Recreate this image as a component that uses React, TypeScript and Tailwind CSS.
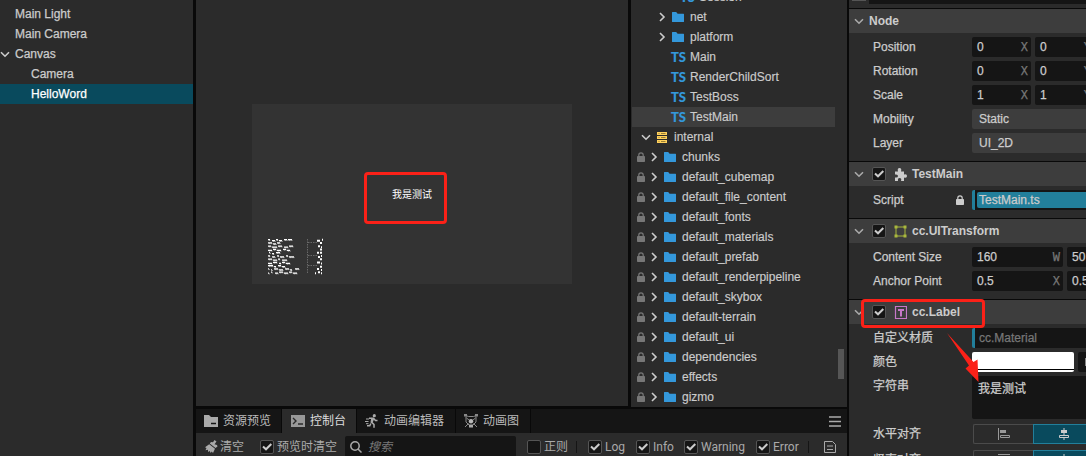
import React from "react";

const STATS: [number, string, string, number][] = [
  [1, "M0 0H2M4 1H7M8 0H10M11 1H14M16 0H19M20 0H24", "M0 1H3M5 0H6", 5],
  [2, "M0 0H4M5 1H8M9 0H12", "M0 0H2", 2],
  [3, "M0 0H3M4 1H9M10 0H14M16 1H20M21 0H25", "M0 0H2M3 1H4", 4],
  [4, "M0 1H4M5 0H8M9 1H13M15 0H18M19 1H22", "M0 0H2", 2],
  [5, "M1 0H2M4 1H6M8 0H12", "M0 0H2M3 0H5", 5],
  [6, "M0 0H2M4 1H7M9 0H11M12 1H16M18 0H20M21 1H26", "M0 1H2M3 0H4", 4],
  [7, "M0 0H4M5 1H9M10 0H12M14 1H19", "M0 0H2", 2],
  [8, "M0 1H4M5 0H9M11 1H13M14 0H17M18 1H22", "M0 0H3M4 1H5", 5],
  [9, "M0 0H5M6 1H8M10 0H13M14 1H17", "M0 1H2", 2],
  [10, "M0 0H1M3 1H4M6 0H10M11 1H15M17 0H21M22 1H24M27 0H31", "M0 0H2M4 1H5", 5],
  [11, "M0 1H1M3 0H4M7 1H10M11 0H15M16 1H20M21 0H24M25 1H29", "M0 1H1M3 0H5M6 1H7", 7],
];

function Chevron({ open = false, className = "" }: { open?: boolean; className?: string }) {
  return (
    <svg width="10" height="10" viewBox="0 0 10 10" fill="none" stroke="currentColor" strokeWidth="1.6" className={`shrink-0 ${className}`}>
      <path d={open ? "M1 3.2L5 7.2L9 3.2" : "M3 1L7 5L3 9"} />
    </svg>
  );
}

function Folder() {
  return (
    <svg width="12" height="10" viewBox="0 0 12 10" fill="#3498db" className="shrink-0">
      <path d="M0 .5Q0 0 .5 0H4.2L5.6 1.7H11.5Q12 1.7 12 2.2V9.5Q12 10 11.5 10H.5Q0 10 0 9.5Z" />
    </svg>
  );
}

function Lock({ color }: { color: string }) {
  return (
    <svg width="8" height="10" viewBox="0 0 8 10" className="shrink-0">
      <path d="M1.8 4.5V3A2.2 2.2 0 0 1 6.2 3V4.5" fill="none" stroke={color} strokeWidth="1.2" />
      <rect y="4" width="8" height="6" rx=".7" fill={color} />
    </svg>
  );
}

function Check({ on = true }: { on?: boolean }) {
  return (
    <span className="block size-[14px] shrink-0 rounded-[2px] border border-[#555] bg-[#151515]">
      {on && (
        <svg width="12" height="12" viewBox="0 0 12 12" fill="none" stroke="#ccc" strokeWidth="2">
          <path d="M2 5.5L5 8.3L10.3 3" />
        </svg>
      )}
    </span>
  );
}

function HRow({ children, className = "" }: { children: React.ReactNode; className?: string }) {
  return <div className={`flex h-5 items-center ${className}`}>{children}</div>;
}

function AssetFolder({ name }: { name: string }) {
  return (
    <HRow className="pl-[6px]">
      <Lock color="#777" />
      <Chevron className="mr-[5px] ml-[4px]" />
      <Folder />
      <span className="ml-[6px]">{name}</span>
    </HRow>
  );
}

function TsMark() {
  return <span className="w-[19px] font-['Lato','Open_Sans',sans-serif] text-[13px] font-black text-[#3498db]">TS</span>;
}

function TsFile({ name, active = false }: { name: string; active?: boolean }) {
  return (
    <HRow className={active ? "mr-[12px] ml-px bg-[#3d3d3d] pl-[39px]" : "pl-10"}>
      <TsMark />
      <span>{name}</span>
    </HRow>
  );
}

function Section({ title, icon, check = true }: { title: string; icon?: React.ReactNode; check?: boolean }) {
  return (
    <div className="flex h-[25px] shrink-0 items-center border-t border-[#090909] bg-[#3d3d3d] pl-[5px]">
      <Chevron open className="text-[#aaa]" />
      {check && <span className="mr-[8px] ml-[8px]"><Check /></span>}
      {icon}
      <b className="ml-[5px] [-webkit-text-stroke:0]">{title}</b>
    </div>
  );
}

function Prop({ label, children, lock = false }: { label: string; children: React.ReactNode; lock?: boolean }) {
  return (
    <div className="flex h-5 shrink-0 items-center pl-6">
      <span className="flex w-[99px] shrink-0 items-center justify-between pr-[8px]">
        {label}
        {lock && <Lock color="#ccc" />}
      </span>
      {children}
    </div>
  );
}

function Num({ value, unit, wide = false }: { value: string; unit: string; wide?: boolean }) {
  return (
    <span className={`mr-1 flex h-5 shrink-0 items-center justify-between rounded-[2px] bg-[#151515] pr-[3px] pl-[5px] ${wide ? "w-[91px]" : "w-[59px]"}`}>
      {value}
      <span className="pt-[2px] font-['Liberation_Mono',monospace] text-[12px] leading-[18px] text-[#777]">{unit}</span>
    </span>
  );
}

function Tab({ icon, label, className }: { icon: React.ReactNode; label: string; className: string }) {
  return (
    <div className={`flex h-6 shrink-0 items-center gap-[5px] border-r border-[#090909] pl-[8px] ${className}`}>
      {icon}
      <span>{label}</span>
    </div>
  );
}

const runner = (
  <svg width="14" height="14" viewBox="0 0 14 14" fill="none" stroke="#aaa" strokeWidth="1.5" className="shrink-0">
    <circle cx="9.3" cy="1.7" r="1.6" fill="#aaa" stroke="none" />
    <path d="M4 4.2H8.5L10.5 6.5H12.5M9 10.2V13.8M5.8 9.5L4.8 11.8H2" />
    <path d="M6.3 3.8L9.2 4.8L7.8 8.2L9.8 10.3L8.5 11L5.5 8.5Z" fill="#aaa" stroke="none" />
    <path d="M1 5H4M0 7.5H3.5M1 9.7H3.5" strokeWidth="1" />
  </svg>
);

const graphIcon = (
  <svg width="14" height="14" viewBox="0 0 14 14" fill="none" stroke="#999" className="shrink-0">
    <path d="M1.5 1.5L4.5 2.5H9.5L12.5 1.5M2 2.5V8L5 11M12 2.5V8L9 11M2.5 4L5 6M11.5 4L9 6M1 13L4.5 9.5M13 13L9.5 9.5" strokeWidth=".9" />
    <circle cx="7" cy="7.3" r="2.2" fill="#bbb" stroke="none" />
    <path d="M5 10.5H9V13.5H5Z" fill="#aaa" stroke="none" />
    <path d="M0 0H3V2.5H0ZM11 0H14V2.5H11Z" fill="#888" stroke="none" />
  </svg>
);

const FOLDERS = ["chunks", "default_cubemap", "default_file_content", "default_fonts", "default_materials", "default_prefab", "default_renderpipeline", "default_skybox", "default-terrain", "default_ui", "dependencies", "effects", "gizmo"];

export default function App() {
  return (
    <div className="relative flex h-[456px] w-[1086px] overflow-hidden bg-[#090909] font-['Liberation_Sans','Noto_Sans_CJK_SC',sans-serif] text-[12px] leading-5 whitespace-nowrap text-[#ccc]">
      <aside className="mr-[3px] w-[193px] shrink-0 bg-[#2b2b2b] pt-1 [-webkit-text-stroke:0.25px]">
        <HRow className="pl-[15px]">Main Light</HRow>
        <HRow className="pl-[15px]">Main Camera</HRow>
        <HRow><Chevron open className="mr-[5px]" />Canvas</HRow>
        <HRow className="pl-[31px]">Camera</HRow>
        <HRow className="bg-[#094a5d] pl-[31px] text-white">HelloWord</HRow>
      </aside>

      <main className="flex w-[651px] shrink-0 flex-col">
        <div className="flex h-[407px] shrink-0 gap-[3px]">
          <section className="h-[406px] w-[432px] shrink-0 bg-[#2b2b2b] pt-[104px] pl-[56px]">
            <div className="flex h-[180px] w-[320px] flex-col bg-[#333]">
              <span className="mt-[81px] ml-[140px] h-5 text-[10px] text-white">我是测试</span>
              <svg width="58" height="38" viewBox="0 0 58 38" className="mt-[33px] ml-[15px]" fill="none">
                {STATS.map(([i, name, value, w]) => (
                  <g key={i} stroke="#fff">
                    <path d={name} transform={`translate(1 ${i * 3.25 - 1.7})`} strokeWidth="1.3" />
                    <path d={name} transform={`translate(1.8 ${i * 3.25 - 0.9})`} strokeWidth=".9" strokeDasharray="1 .8" opacity=".8" />
                    <path d={value} transform={`translate(${55 - w} ${i * 3.25 - 1.6})`} strokeWidth="2" />
                  </g>
                ))}
                <path d="M40.5 1V36M41 4.5H51M41 17.5H50M41 27.5H51" stroke="#777" strokeWidth=".8" strokeDasharray="1.5 1" />
              </svg>
            </div>
          </section>

          <section className="relative h-[407px] w-[216px] shrink-0 overflow-hidden bg-[#2b2b2b] [-webkit-text-stroke:0.15px]">
            <div className="-mt-[13px]">
              <HRow className="pl-[49px]"><TsMark />Session</HRow>
              {["net", "platform"].map((n) => (
                <HRow key={n} className="pl-[26px]">
                  <Chevron className="mr-[5px]" /><Folder /><span className="ml-[6px]">{n}</span>
                </HRow>
              ))}
              <TsFile name="Main" />
              <TsFile name="RenderChildSort" />
              <TsFile name="TestBoss" />
              <TsFile name="TestMain" active />
              <HRow className="pl-[10px]">
                <Chevron open className="mr-[6px]" />
                <svg width="10" height="11" viewBox="0 0 10 11" fill="#ffd15c" className="mr-[7px]">
                  <path d="M0 0H10V3H0ZM0 4H10V7H0ZM0 8H10V11H0Z" />
                  <path d="M1.5 1.5H2.5M4 1.5H8.5M1.5 5.5H2.5M4 5.5H8.5M1.5 9.5H2.5M4 9.5H8.5" stroke="#806829" strokeWidth=".8" />
                </svg>
                internal
              </HRow>
              {FOLDERS.map((n) => <AssetFolder key={n} name={n} />)}
            </div>
            <i className="absolute top-[349px] right-[3px] h-[30px] w-[6px] bg-[#565656]" />
          </section>
        </div>

        <div className="mt-[2px] flex h-6 shrink-0 bg-[#151515] text-[#bbb]">
          <Tab className="w-[86px]" label="资源预览" icon={
            <svg width="14" height="12" viewBox="0 0 14 12" className="shrink-0"><path d="M0 0H5L7 2H14V12H0Z" fill="#aaa" /><path d="M7 8.5H12" stroke="#151515" strokeWidth="1.5" /></svg>
          } />
          <Tab className="w-[75px] bg-[#2b2b2b] text-[#ddd]" label="控制台" icon={
            <svg width="14" height="12" viewBox="0 0 14 12" className="ml-px shrink-0"><path d="M0 0H14V12H0Z" fill="#999" /><path d="M2 3L5 6L2 9M7 9H12" fill="none" stroke="#2b2b2b" strokeWidth="1.4" /></svg>
          } />
          <Tab className="w-[99px]" label="动画编辑器" icon={runner} />
          <Tab className="w-[75px]" label="动画图" icon={graphIcon} />
          <svg width="12" height="12" viewBox="0 0 12 12" className="mt-[7px] mr-[6px] ml-auto"><path d="M0 1H12M0 5.5H12M0 10H12" stroke="#aaa" strokeWidth="1.7" /></svg>
        </div>
        <div className="flex h-[27px] shrink-0 items-center bg-[#2b2b2b] pl-[9px] text-[#aaa]">
          <svg width="13" height="13" viewBox="0 0 13 13" className="shrink-0">
            <path d="M9.5 0L11.5 1.5L9.5 4.2L12 5L12.5 6.5L10.5 8L4.8 3.5L6 2L8 2.2Z" fill="#aaa" />
            <path d="M4.2 4.2L10 8.8L8 13L6.7 11.5L5.7 13L4.7 11L3 12L3 9.8L.5 10.3L1.5 8L0 7.2Z" fill="#aaa" />
          </svg>
          <span className="ml-[2px] w-[40px]">清空</span>
          <Check /><span className="ml-[3px] w-[68px]">预览时清空</span>
          <div className="flex h-[22px] w-[171px] shrink-0 items-center rounded-[2px] bg-[#151515] pl-[5px]">
            <svg width="12" height="12" viewBox="0 0 12 12" fill="none" stroke="#aaa" strokeWidth="1.5"><circle cx="5" cy="5" r="4.2" /><path d="M8 8L11.5 11.5" /></svg>
            <span className="ml-[6px] text-[#777] italic">搜索</span>
          </div>
          <span className="ml-[11px]"><Check on={false} /></span><span className="ml-[3px] w-[32px]">正则</span>
          <i className="mr-[11px] h-3 w-px bg-[#151515]" />
          <div className="flex items-center font-['Roboto',sans-serif] text-[12px]">
            <Check /><span className="ml-[3px] w-[31px]">Log</span>
            <Check /><span className="ml-[3px] w-[31px]">Info</span>
            <Check /><span className="ml-[3px] w-[55px]">Warning</span>
            <Check /><span className="ml-[3px] w-[35px]">Error</span>
          </div>
          <i className="mr-[15px] h-3 w-px bg-[#151515]" />
          <svg width="12" height="12" viewBox="0 0 12 12" fill="none" stroke="#aaa"><path d="M.5 .5H8.5L11.5 3.5V11.5H.5ZM3 5H9M3 8.5H9" /></svg>
        </div>
      </main>

      <aside className="ml-[2px] flex w-[237px] shrink-0 flex-col overflow-hidden bg-[#2b2b2b] [-webkit-text-stroke:0.25px]">
        <div className="flex h-[8px] shrink-0 items-start pl-[3px]">
          <i className="h-px w-[14px] bg-[#555]" /><i className="ml-[3px] h-1 flex-1 bg-[#151515]" />
        </div>
        <Section title="Node" check={false} />
        <div className="flex h-[128px] shrink-0 flex-col gap-1 pt-1">
          <Prop label="Position"><Num value="0" unit="X" /><Num value="0" unit="Y" /></Prop>
          <Prop label="Rotation"><Num value="0" unit="X" /><Num value="0" unit="Y" /></Prop>
          <Prop label="Scale"><Num value="1" unit="X" /><Num value="1" unit="Y" /></Prop>
          <Prop label="Mobility"><span className="h-5 flex-1 rounded-l-[2px] bg-[#3d3d3d] pl-[7px]">Static</span></Prop>
          <Prop label="Layer"><span className="h-5 flex-1 rounded-l-[2px] bg-[#3d3d3d] pl-[7px]">UI_2D</span></Prop>
        </div>
        <Section title="TestMain" icon={
          <svg width="13" height="13" viewBox="0 0 13 13" fill="#ccc"><path d="M1 3.5H4Q3 0 5.5 0Q8 0 7 3.5H10V6.5Q13 5.5 13 8Q13 10.5 10 9.5V13H7Q8 10 5.5 10Q3.5 10 4 13H1V9.5Q4 10 4 8Q4 6 1 6.5Z" /></svg>
        } />
        <div className="h-[32px] shrink-0 pt-1">
          <Prop label="Script" lock>
            <span className="flex h-5 flex-1 rounded-l-[2px] border-l-[3px] border-[#227f9b] bg-[#151515] py-[2px] pl-[2px]">
              <span className="flex-1 rounded-l-[2px] bg-[#227f9b] pl-[2px] leading-[16px]">TestMain.ts</span>
            </span>
          </Prop>
        </div>
        <Section title="cc.UITransform" icon={
          <svg width="13" height="13" viewBox="0 0 13 13" fill="#a9b83d"><path d="M2 2H11V11H2Z" fill="none" stroke="#a9b83d" /><path d="M.5 .5H3.5V3.5H.5ZM9.5 .5H12.5V3.5H9.5ZM.5 9.5H3.5V12.5H.5ZM9.5 9.5H12.5V12.5H9.5Z" /></svg>
        } />
        <div className="flex h-[56px] shrink-0 flex-col gap-1 pt-1">
          <Prop label="Content Size"><Num wide value="160" unit="W" /><Num wide value="50" unit="H" /></Prop>
          <Prop label="Anchor Point"><Num wide value="0.5" unit="X" /><Num wide value="0.5" unit="Y" /></Prop>
        </div>
        <Section title="cc.Label" icon={
          <svg width="13" height="13" viewBox="0 0 13 13" fill="none" stroke="#c678c8"><path d="M1.5 .5H12.5V12.5H1.5Z" strokeWidth="1.2" /><path d="M4 4H10M7 3.5V10.5" strokeWidth="2" /></svg>
        } />
        <div className="flex shrink-0 flex-col gap-1 pt-1">
          <Prop label="自定义材质"><span className="h-5 flex-1 rounded-l-[2px] border-l-[3px] border-[#227f9b] bg-[#151515] pl-[4px] text-[#777]">cc.Material</span></Prop>
          <Prop label="颜色">
            <span className="flex h-5 w-[102px] shrink-0 flex-col justify-end rounded-[2px] bg-white pb-[2px]"><i className="h-px bg-black" /></span>
            <span className="ml-1 flex h-5 flex-1 items-center rounded-l-[2px] bg-[#151515] pl-[7px]"><i className="h-2 w-2 border border-[#888]" /></span>
          </Prop>
          <div className="flex h-[43px] pl-6">
            <span className="w-[99px] shrink-0">字符串</span>
            <span className="flex-1 rounded-l-[2px] bg-[#151515] pt-[3px] pl-[6px]">我是测试</span>
          </div>
          {["水平对齐", "竖直对齐"].map((label, i) => (
            <div key={label} className={i ? "mt-[2px]" : "mt-px"}>
              <Prop label={label}>
                <span className="ml-px flex h-5 w-[60px] shrink-0 items-center justify-center rounded-l-[2px] border border-r-0 border-[#4b4b4b]">
                  <svg width="12" height="12" viewBox="0 0 12 12" fill="#999"><path d={i ? "M0 0H12V1H0Z" : "M0 0H1V12H0ZM2 2H8V5H2Z"} /><path d="M2.5 7.5H11.5V9.5H2.5Z" fill="none" stroke="#999" /></svg>
                </span>
                <span className="flex h-5 w-[61px] shrink-0 items-center justify-center border border-[#227f9b] bg-[#094a5d]">
                  <svg width="12" height="12" viewBox="0 0 12 12" fill="#ccc"><path d="M5.5 0H6.5V12H5.5ZM3 2H9V5H3Z" /><path d="M1.5 7.5H10.5V9.5H1.5Z" fill="#094a5d" stroke="#ccc" /></svg>
                </span>
              </Prop>
            </div>
          ))}
        </div>
      </aside>

      <i className="absolute top-[172px] left-[364px] h-[52px] w-[83px] rounded-[4px] border-[3px] border-[#fb2118]" />
      <i className="absolute top-[299px] left-[861px] h-[29px] w-[124px] rounded-[4px] border-[3px] border-[#fb2118]" />
      <svg width="34" height="50" viewBox="0 0 34 50" className="absolute top-[333px] left-[947px]">
        <path d="M0 0L26.5 29L30.5 26.5L31.5 49L18.5 35.5L22 32.5Z" fill="#fb2118" />
      </svg>
    </div>
  );
}
